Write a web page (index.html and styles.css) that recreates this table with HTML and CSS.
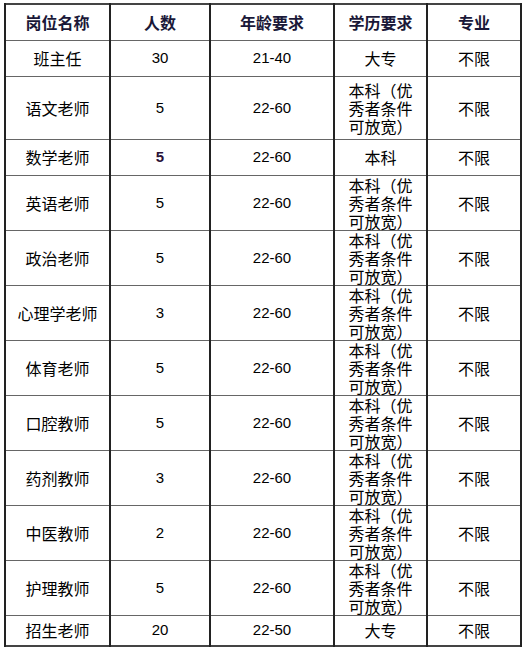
FILE: index.html
```html
<!DOCTYPE html>
<html lang="zh">
<head>
<meta charset="utf-8">
<link rel="stylesheet" href="styles.css">
</head>
<body>
<table class="jobs">
  <colgroup>
    <col class="c1"><col class="c2"><col class="c3"><col class="c4"><col class="c5">
  </colgroup>
  <thead>
    <tr class="h36">
      <th>岗位名称</th><th>人数</th><th>年龄要求</th><th>学历要求</th><th>专业</th>
    </tr>
  </thead>
  <tbody>
    <tr class="h36"><td>班主任</td><td class="num">30</td><td class="num">21-40</td><td>大专</td><td>不限</td></tr>
    <tr class="h63"><td>语文老师</td><td class="num">5</td><td class="num">22-60</td><td class="multi"><span class="ln">本科（优</span><span class="ln">秀者条件</span><span class="ln">可放宽）</span></td><td>不限</td></tr>
    <tr class="h36"><td>数学老师</td><td class="num strong">5</td><td class="num">22-60</td><td>本科</td><td>不限</td></tr>
    <tr class="h55"><td>英语老师</td><td class="num">5</td><td class="num">22-60</td><td class="multi"><span class="ln">本科（优</span><span class="ln">秀者条件</span><span class="ln">可放宽）</span></td><td>不限</td></tr>
    <tr class="h55"><td>政治老师</td><td class="num">5</td><td class="num">22-60</td><td class="multi"><span class="ln">本科（优</span><span class="ln">秀者条件</span><span class="ln">可放宽）</span></td><td>不限</td></tr>
    <tr class="h55"><td>心理学老师</td><td class="num">3</td><td class="num">22-60</td><td class="multi"><span class="ln">本科（优</span><span class="ln">秀者条件</span><span class="ln">可放宽）</span></td><td>不限</td></tr>
    <tr class="h55"><td>体育老师</td><td class="num">5</td><td class="num">22-60</td><td class="multi"><span class="ln">本科（优</span><span class="ln">秀者条件</span><span class="ln">可放宽）</span></td><td>不限</td></tr>
    <tr class="h55"><td>口腔教师</td><td class="num">5</td><td class="num">22-60</td><td class="multi"><span class="ln">本科（优</span><span class="ln">秀者条件</span><span class="ln">可放宽）</span></td><td>不限</td></tr>
    <tr class="h55"><td>药剂教师</td><td class="num">3</td><td class="num">22-60</td><td class="multi"><span class="ln">本科（优</span><span class="ln">秀者条件</span><span class="ln">可放宽）</span></td><td>不限</td></tr>
    <tr class="h55"><td>中医教师</td><td class="num">2</td><td class="num">22-60</td><td class="multi"><span class="ln">本科（优</span><span class="ln">秀者条件</span><span class="ln">可放宽）</span></td><td>不限</td></tr>
    <tr class="h55"><td>护理教师</td><td class="num">5</td><td class="num">22-60</td><td class="multi"><span class="ln">本科（优</span><span class="ln">秀者条件</span><span class="ln">可放宽）</span></td><td>不限</td></tr>
    <tr class="h31"><td>招生老师</td><td class="num">20</td><td class="num">22-50</td><td>大专</td><td>不限</td></tr>
  </tbody>
</table>
</body>
</html>
```

FILE: styles.css
```css
html, body {
  margin: 0;
  padding: 0;
  background: #ffffff;
}

.jobs {
  margin: 3px 0 0 4px;
  border-collapse: collapse;
  table-layout: fixed;
  width: 518px;
  font-family: "Noto Sans CJK SC", "Liberation Sans", sans-serif;
  font-size: 16px;
  color: #000000;
  border: 2px solid #444444;
}

.c1 { width: 105px; }
.c2 { width: 100px; }
.c3 { width: 124px; }
.c4 { width: 93px; }
.c5 { width: 94px; }

.jobs th,
.jobs td {
  padding: 0;
  text-align: center;
  vertical-align: middle;
  border-top: 1px solid #666666;
  border-bottom: 1px solid #666666;
  border-left: 2px solid #222222;
  border-right: 2px solid #222222;
  line-height: 18px;
}

.jobs th {
  font-weight: bold;
  color: #1a1838;
}

.num {
  font-family: "Liberation Sans", "DejaVu Sans", sans-serif;
  font-size: 15px;
}

.strong {
  font-weight: bold;
  color: #2a1238;
}

.multi {
  line-height: 18px;
}

.ln {
  display: block;
  height: 18px;
  line-height: 18px;
  white-space: nowrap;
}

.h36 { height: 36px; }
.h63 { height: 63px; }
.h55 { height: 55px; }
.h31 { height: 31px; }
```
